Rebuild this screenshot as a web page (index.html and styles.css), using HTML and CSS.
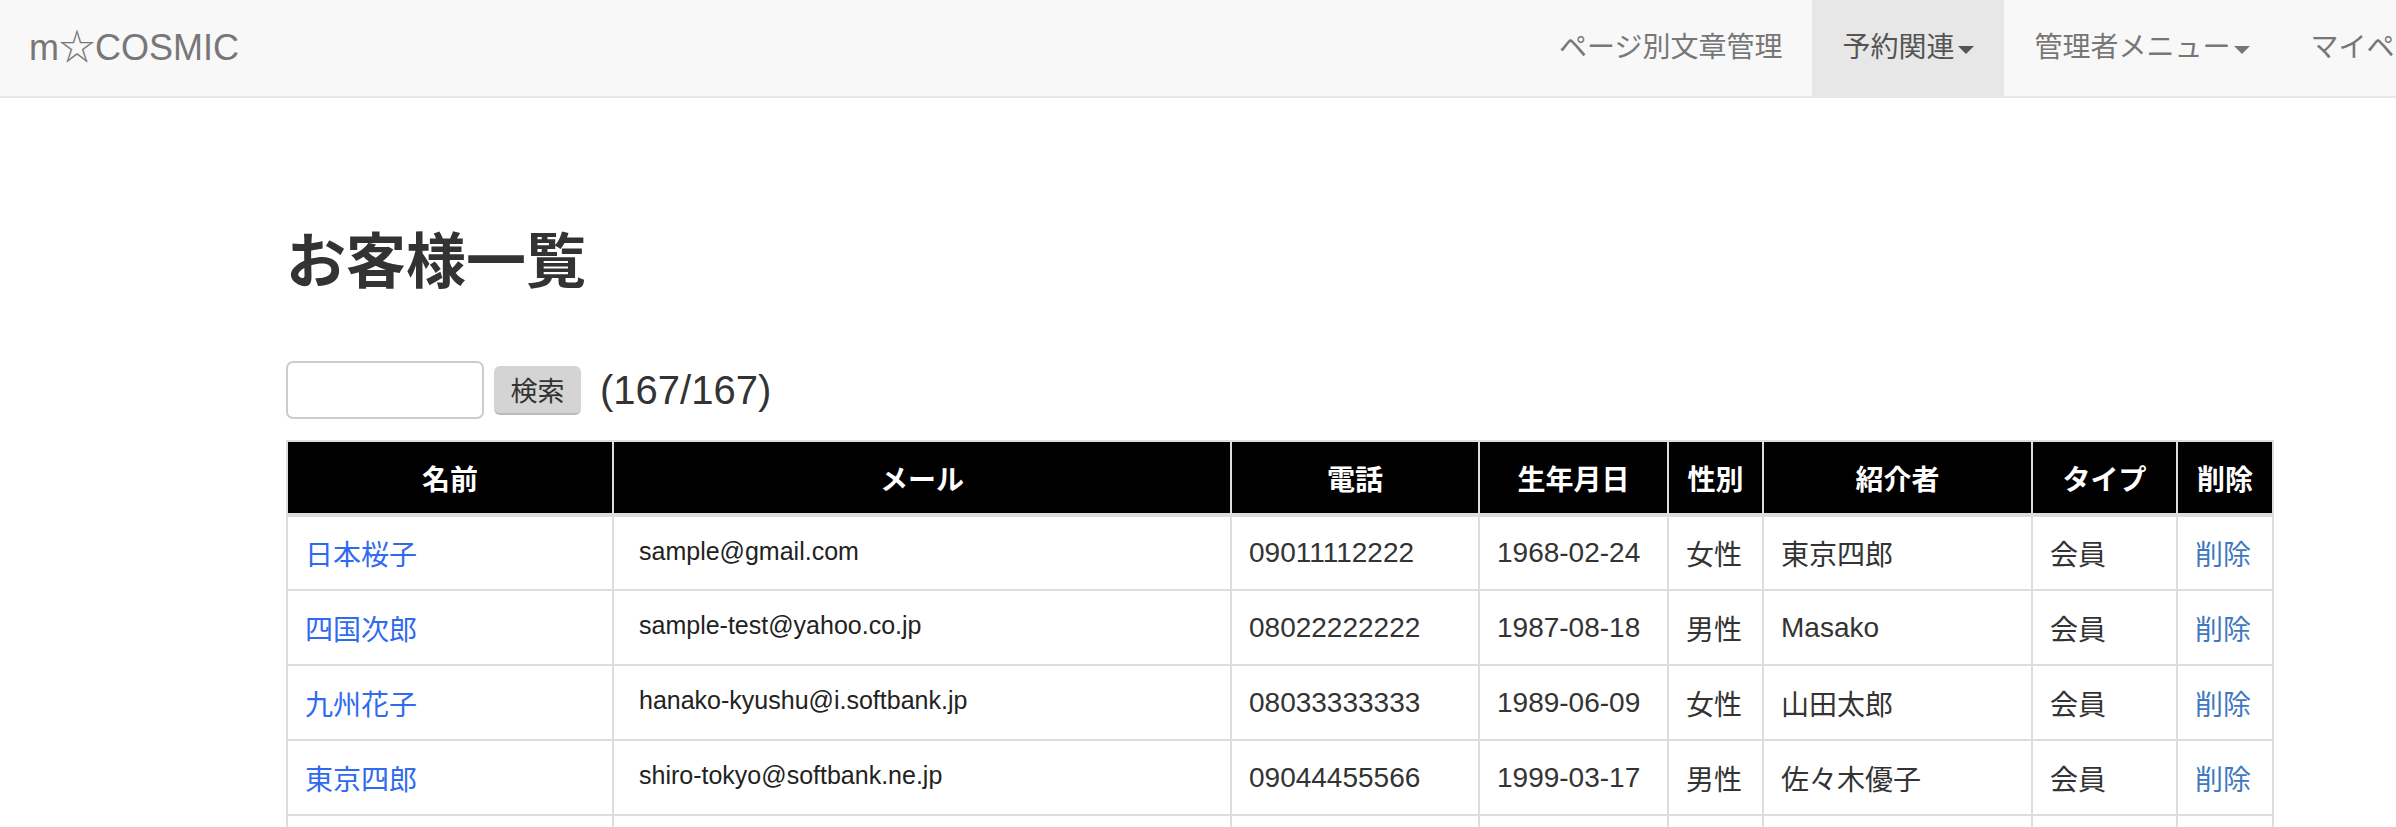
FILE: index.html
```html
<!DOCTYPE html>
<html lang="ja">
<head>
  <meta charset="UTF-8">
  <meta name="viewport" content="width=device-width, initial-scale=1">
  <title>お客様一覧 | m☆COSMIC</title>
  <link rel="stylesheet" href="styles.css">
</head>
<body>
  <nav class="navbar">
    <a class="navbar-brand" href="#">m☆COSMIC</a>
    <ul class="navbar-nav">
      <li><a href="#">ページ別文章管理</a></li>
      <li class="open"><a href="#">予約関連<span class="caret"></span></a></li>
      <li><a href="#">管理者メニュー<span class="caret"></span></a></li>
      <li><a href="#">マイページ<span class="caret"></span></a></li>
    </ul>
  </nav>

  <div class="content">
    <h2>お客様一覧</h2>

    <form class="search-form">
      <input type="text" class="search-input">
      <button type="button" class="search-btn">検索</button>
      <span class="count">(167/167)</span>
    </form>

    <table class="customer-table">
      <colgroup>
        <col class="c-name">
        <col class="c-mail">
        <col class="c-tel">
        <col class="c-birth">
        <col class="c-sex">
        <col class="c-intro">
        <col class="c-type">
        <col class="c-del">
      </colgroup>
      <thead>
        <tr>
          <th>名前</th>
          <th>メール</th>
          <th>電話</th>
          <th>生年月日</th>
          <th>性別</th>
          <th>紹介者</th>
          <th>タイプ</th>
          <th>削除</th>
        </tr>
      </thead>
      <tbody>
        <tr>
          <td><a class="name-link" href="#">日本桜子</a></td>
          <td class="mail">sample@gmail.com</td>
          <td>09011112222</td>
          <td>1968-02-24</td>
          <td>女性</td>
          <td>東京四郎</td>
          <td>会員</td>
          <td><a class="del-link" href="#">削除</a></td>
        </tr>
        <tr>
          <td><a class="name-link" href="#">四国次郎</a></td>
          <td class="mail">sample-test@yahoo.co.jp</td>
          <td>08022222222</td>
          <td>1987-08-18</td>
          <td>男性</td>
          <td>Masako</td>
          <td>会員</td>
          <td><a class="del-link" href="#">削除</a></td>
        </tr>
        <tr>
          <td><a class="name-link" href="#">九州花子</a></td>
          <td class="mail">hanako-kyushu@i.softbank.jp</td>
          <td>08033333333</td>
          <td>1989-06-09</td>
          <td>女性</td>
          <td>山田太郎</td>
          <td>会員</td>
          <td><a class="del-link" href="#">削除</a></td>
        </tr>
        <tr>
          <td><a class="name-link" href="#">東京四郎</a></td>
          <td class="mail">shiro-tokyo@softbank.ne.jp</td>
          <td>09044455566</td>
          <td>1999-03-17</td>
          <td>男性</td>
          <td>佐々木優子</td>
          <td>会員</td>
          <td><a class="del-link" href="#">削除</a></td>
        </tr>
        <tr class="last-row">
          <td></td>
          <td class="mail"></td>
          <td></td>
          <td></td>
          <td></td>
          <td></td>
          <td></td>
          <td></td>
        </tr>
      </tbody>
    </table>
  </div>
</body>
</html>
```

FILE: styles.css
```css
/* base */
* { box-sizing: border-box; }
body {
  margin: 0;
  font-family: "Liberation Sans", "Noto Sans CJK JP", sans-serif;
  font-size: 28px;
  color: #333;
  background: #fff;
  overflow: hidden;
}
a { text-decoration: none; }

/* navbar */
.navbar {
  display: grid;
  grid-template-columns: 1529px auto;
  height: 98px;
  background: #f8f8f8;
  border-bottom: 2px solid #e7e7e7;
  overflow: hidden;
}
.navbar-brand {
  padding-left: 29px;
  font-size: 36px;
  line-height: 96px;
  color: #777;
}
.navbar-nav {
  display: flex;
  margin: 0;
  padding: 0;
  list-style: none;
  white-space: nowrap;
}
.navbar-nav a {
  display: block;
  padding: 0 30px;
  line-height: 96px;
  color: #777;
}
.navbar-nav .open a {
  background: #e7e7e7;
  color: #555;
}
.caret {
  display: inline-block;
  width: 0;
  height: 0;
  margin-left: 4px;
  vertical-align: middle;
  border-top: 8px solid;
  border-left: 8px solid transparent;
  border-right: 8px solid transparent;
}

/* content */
.content {
  padding: 132px 0 0 286px;
}
h2 {
  margin: 0 0 65px;
  font-size: 60px;
  font-weight: bold;
  line-height: 66px;
  color: #333;
}

/* search */
.search-form {
  display: flex;
  align-items: center;
  height: 58px;
  margin-bottom: 21px;
}
.search-input {
  width: 198px;
  height: 58px;
  border: 2px solid #ccc;
  border-radius: 7px;
  background: #fff;
}
.search-btn {
  width: 87px;
  height: 49px;
  margin-left: 10px;
  border: none;
  border-bottom: 2px solid #bbb;
  border-radius: 6px;
  background: #d4d4d4;
  color: #333;
  font-family: "Liberation Sans", "Noto Sans CJK JP", sans-serif;
  font-size: 27px;
}
.count {
  margin-left: 19px;
  font-size: 40px;
}

/* table */
.customer-table {
  width: 1986px;
  border-collapse: collapse;
  table-layout: fixed;
  border: 2px solid #ddd;
}
.c-name  { width: 326px; }
.c-mail  { width: 618px; }
.c-tel   { width: 248px; }
.c-birth { width: 189px; }
.c-sex   { width: 95px; }
.c-intro { width: 269px; }
.c-type  { width: 145px; }
.c-del   { width: 96px; }

.customer-table th {
  height: 74px;
  padding: 0;
  background: #000;
  color: #fff;
  font-weight: bold;
  text-align: center;
  border: 2px solid #ddd;
  border-bottom-width: 4px;
}
.customer-table td {
  height: 75px;
  padding: 0 17px;
  border: 2px solid #ddd;
  white-space: nowrap;
}
.customer-table td.mail {
  padding-left: 25px;
  padding-bottom: 4px;
  font-size: 25px;
  color: #222;
}
.name-link { color: #2f6af0; }
.del-link  { color: #4078c0; }
```
